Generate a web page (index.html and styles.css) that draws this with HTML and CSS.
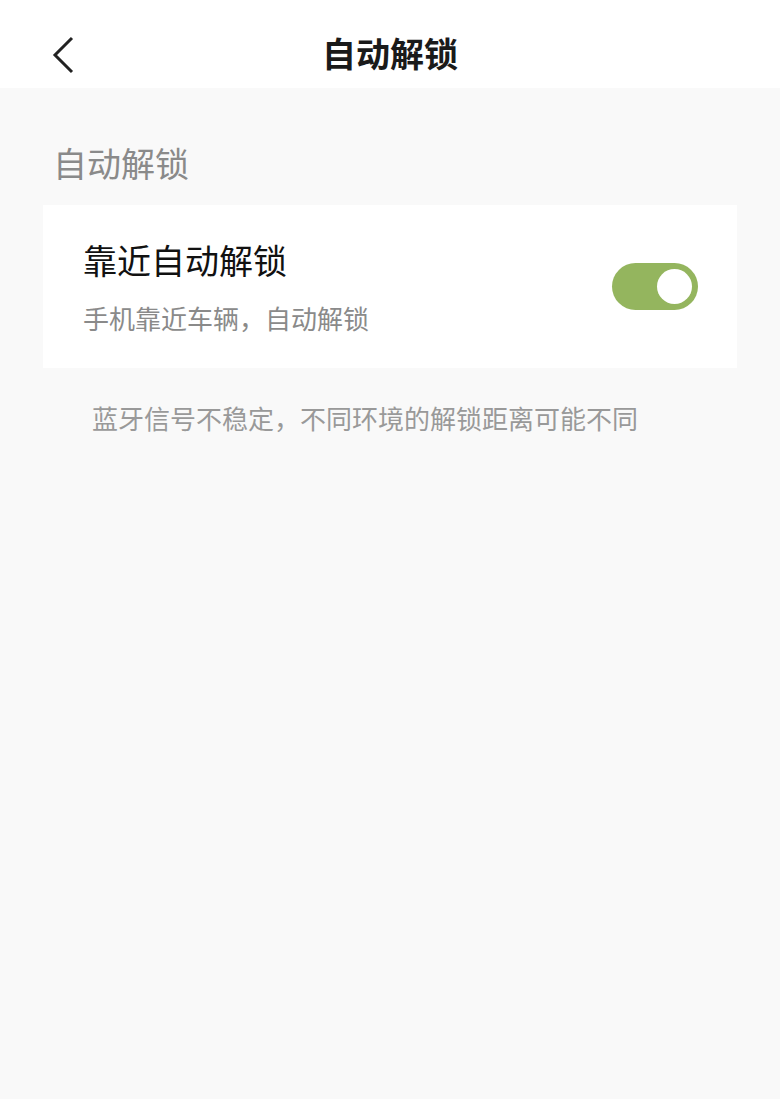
FILE: index.html
```html
<!DOCTYPE html>
<html lang="zh-CN">
<head>
<meta charset="utf-8">
<title>自动解锁</title>
<link rel="stylesheet" href="styles.css">
</head>
<body>
<header class="topbar">
  <button class="back" aria-label="返回">
    <svg width="24" height="38" viewBox="0 0 24 38"><path d="M21 2 L4 19 L21 36" fill="none" stroke="#222" stroke-width="3" stroke-linecap="butt" stroke-linejoin="miter"/></svg>
  </button>
  <h1 class="title">自动解锁</h1>
</header>
<main class="content">
  <div class="section-label">自动解锁</div>
  <section class="card">
    <div class="card-text">
      <div class="card-title">靠近自动解锁</div>
      <div class="card-sub">手机靠近车辆，自动解锁</div>
    </div>
    <div class="switch on"><span class="knob"></span></div>
  </section>
  <p class="note">蓝牙信号不稳定，不同环境的解锁距离可能不同</p>
</main>
</body>
</html>
```
FILE: styles.css
```css
* { box-sizing: border-box; }
html, body { margin: 0; padding: 0; }
body {
  width: 780px;
  min-height: 1099px;
  background: #f9f9f9;
  font-family: "Noto Sans CJK SC", "Noto Sans", sans-serif;
}
.topbar {
  height: 88px;
  background: #ffffff;
  display: flex;
  align-items: center;
  justify-content: center;
  position: relative;
}
.back {
  position: absolute;
  left: 51px;
  top: 36px;
  padding: 0;
  border: 0;
  background: none;
  display: flex;
}
.title {
  margin: 0;
  font-size: 34px;
  line-height: 34px;
  font-weight: 700;
  color: #1a1a1a;
  padding-top: 18px;
}
.content {
  padding: 0 43px;
}
.section-label {
  font-size: 34px;
  line-height: 34px;
  color: #8a8a8a;
  padding-left: 10px;
  margin-top: 58px;
}
.card {
  margin-top: 25px;
  background: #ffffff;
  height: 163px;
  display: flex;
  align-items: center;
  justify-content: space-between;
  padding: 0 39px 0 40px;
}
.card-text {
  display: flex;
  flex-direction: column;
}
.card-title {
  font-size: 34px;
  line-height: 34px;
  color: #111111;
}
.card-sub {
  margin-top: 28px;
  font-size: 26px;
  line-height: 26px;
  color: #8a8a8a;
}
.switch {
  width: 86px;
  height: 47px;
  border-radius: 24px;
  background: #94b55e;
  display: flex;
  align-items: center;
  justify-content: flex-end;
  padding-right: 6px;
}
.knob {
  width: 35px;
  height: 35px;
  border-radius: 50%;
  background: #ffffff;
}
.note {
  margin: 37px 0 0 49px;
  font-size: 26px;
  line-height: 26px;
  color: #999999;
}
```
